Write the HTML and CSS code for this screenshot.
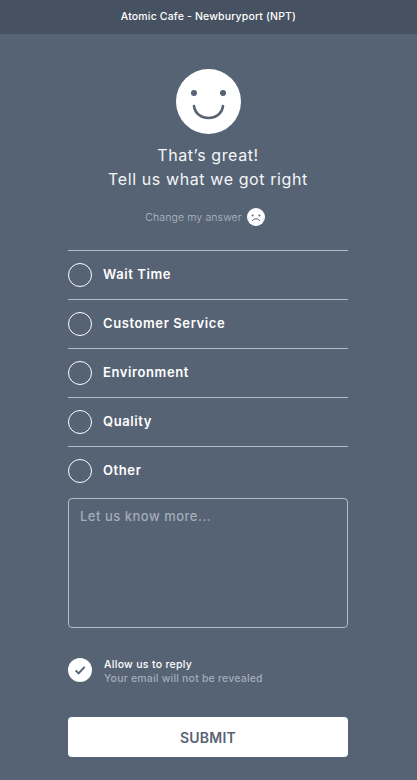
FILE: index.html
```html
<!DOCTYPE html>
<html lang="en">
<head>
  <meta charset="UTF-8">
  <title>Feedback</title>
  <meta name="viewport" content="width=device-width, initial-scale=1.0">
  <link rel="stylesheet" href="styles.css">
</head>
<body>

<div class="header">Atomic Cafe - Newburyport (NPT)</div>

<div class="container">

  <!-- Big smiley -->
  <svg class="face" viewBox="0 0 65 65">
    <circle cx="32.5" cy="32.5" r="32.5" fill="#fff"/>
    <circle cx="18" cy="24" r="3" fill="#566374"/>
    <circle cx="47" cy="24" r="3" fill="#566374"/>
    <path d="M18 37 C20 53 45 53 47 37" fill="none" stroke="#566374" stroke-width="2.6" stroke-linecap="round"/>
  </svg>

  <h1>That’s great!<br>Tell us what we got right</h1>

  <div class="change">
    <span>Change my answer</span>
    <svg class="face-small" viewBox="0 0 18 18">
      <circle cx="9" cy="9" r="9" fill="#fff"/>
      <circle cx="5.6" cy="7.4" r="1" fill="#566374"/>
      <circle cx="12.4" cy="7.4" r="1" fill="#566374"/>
      <path d="M5.2 13 C6.5 10 11.5 10 12.8 13" fill="none" stroke="#566374" stroke-width="1"/>
    </svg>
  </div>

  <div class="options">
    <div class="option"><span class="radio"></span><span class="option-label">Wait Time</span></div>
    <div class="option"><span class="radio"></span><span class="option-label">Customer Service</span></div>
    <div class="option"><span class="radio"></span><span class="option-label">Environment</span></div>
    <div class="option"><span class="radio"></span><span class="option-label">Quality</span></div>
    <div class="option"><span class="radio"></span><span class="option-label">Other</span></div>
  </div>

  <textarea class="more" placeholder="Let us know more..."></textarea>

  <div class="reply">
    <svg class="check" viewBox="0 0 24 24">
      <circle cx="12" cy="12" r="12" fill="#fff"/>
      <path d="M7.6 12.4 L10.6 15.4 L16.6 8.8" fill="none" stroke="#566374" stroke-width="2"/>
    </svg>
    <div class="reply-text">
      <div class="reply-title">Allow us to reply</div>
      <div class="reply-note">Your email will not be revealed</div>
    </div>
  </div>

  <button class="button">SUBMIT</button>
</div>

</body>
</html>
```

FILE: styles.css
```css
body {
  font-family: Inter, "Noto Sans", sans-serif;
  background-color: #566374;
  color: #fff;
  margin: 0;
}

.header {
  height: 34px;
  line-height: 33px;
  background-color: #465261;
  text-align: center;
  font-size: 10.5px;
  font-weight: 500;
  letter-spacing: 0.16px;
}

.container {
  width: 280px;
  margin-left: 68px;
  padding-top: 35px;
}

.face {
  display: block;
  width: 65px;
  height: 65px;
  margin: 0 auto;
}

h1 {
  margin: 9px 0 0 0;
  font-size: 16px;
  font-weight: 400;
  line-height: 24px;
  letter-spacing: 0.6px;
  text-align: center;
  color: #f4f6f8;
}

.change {
  display: flex;
  justify-content: center;
  align-items: center;
  gap: 5px;
  margin-top: 17px;
  padding-right: 6px;
  height: 18px;
  font-size: 10.5px;
  font-weight: 300;
  letter-spacing: 0.12px;
  color: #b4bcc8;
}

.face-small {
  width: 18px;
  height: 18px;
}

.options {
  margin-top: 24px;
  margin-bottom: 4px;
}

.option {
  display: flex;
  align-items: center;
  height: 48px;
  border-top: 1px solid #b4bcc8;
  font-size: 13px;
  font-weight: 600;
  letter-spacing: 0.6px;
}

.option:last-child {
  height: 47px;
}

.option-label {
  padding-bottom: 2px;
}

.radio {
  box-sizing: border-box;
  width: 24px;
  height: 24px;
  margin-right: 11px;
  border: 1px solid #fff;
  border-radius: 50%;
}

.more {
  display: block;
  box-sizing: border-box;
  width: 280px;
  height: 130px;
  padding: 9px 11px;
  background: transparent;
  border: 1px solid #b4bcc8;
  border-radius: 4px;
  font-family: inherit;
  font-size: 13px;
  font-weight: 500;
  letter-spacing: 0.5px;
  resize: none;
}

.more::placeholder {
  color: #a3acba;
  opacity: 1;
}

.reply {
  display: flex;
  align-items: center;
  gap: 12px;
  margin-top: 26px;
}

.check {
  width: 24px;
  height: 24px;
}

.reply-text {
  padding-top: 4px;
}

.reply-title {
  font-size: 10.5px;
  font-weight: 500;
  line-height: 14px;
  letter-spacing: 0.3px;
}

.reply-note {
  font-size: 10.5px;
  font-weight: 500;
  line-height: 14px;
  letter-spacing: 0.2px;
  color: #a3acba;
}

.button {
  display: block;
  width: 280px;
  height: 40px;
  margin-top: 31px;
  background-color: #fff;
  color: #566374;
  border: none;
  border-radius: 4px;
  font-family: inherit;
  font-size: 14px;
  font-weight: 600;
  letter-spacing: 0.2px;
}
```
